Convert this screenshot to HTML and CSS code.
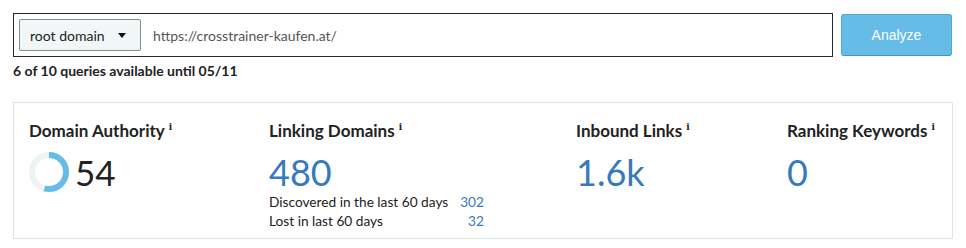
FILE: index.html
```html
<!DOCTYPE html>
<html>
<head>
<meta charset="utf-8">
<link rel="stylesheet" href="styles.css">
</head>
<body>
<div class="wrap">
  <div class="search-row">
    <div class="search-box">
      <div class="scope">root domain <span class="caret"></span></div>
      <div class="url">https://crosstrainer-kaufen.at/</div>
    </div>
    <button class="analyze">Analyze</button>
  </div>
  <div class="quota">6 of 10 queries available until 05/11</div>
  <div class="card">
    <div class="metric">
      <div class="label">Domain Authority<sup class="info">i</sup></div>
      <div class="da-row">
        <svg class="ring" width="40" height="40" viewBox="0 0 40 40">
          <circle cx="20" cy="20" r="17" fill="none" stroke="#eef4f6" stroke-width="6"/>
          <circle cx="20" cy="20" r="17" fill="none" stroke="#67bbe9" stroke-width="6" stroke-dasharray="57.7 106.8" transform="rotate(-90 20 20)"/>
        </svg>
        <span class="value dark">54</span>
      </div>
    </div>
    <div class="metric">
      <div class="label">Linking Domains<sup class="info">i</sup></div>
      <div class="value">480</div>
      <div class="sub"><span>Discovered in the last 60 days</span><span class="num">302</span></div>
      <div class="sub"><span>Lost in last 60 days</span><span class="num">32</span></div>
    </div>
    <div class="metric">
      <div class="label">Inbound Links<sup class="info">i</sup></div>
      <div class="value">1.6k</div>
    </div>
    <div class="metric">
      <div class="label">Ranking Keywords<sup class="info">i</sup></div>
      <div class="value">0</div>
    </div>
  </div>
</div>
</body>
</html>
```
FILE: styles.css
```css
* { box-sizing: border-box; }
body {
  margin: 0;
  background: #fff;
  font-family: Lato, "Noto Sans", sans-serif;
  color: #222;
}
.wrap { padding: 13px 14px 0 13px; }
.search-row {
  display: flex;
  align-items: center;
  gap: 8px;
}
.search-box {
  flex: 1;
  height: 44px;
  border: 1px solid #26262b;
  display: flex;
  align-items: center;
  padding: 0 5px;
  gap: 12px;
}
.scope {
  width: 122px;
  height: 32px;
  background: #f1f6f6;
  border: 1px solid #7f8e8f;
  border-radius: 2px;
  display: flex;
  align-items: center;
  padding-left: 10px;
  font-size: 14px;
  color: #222;
}
.caret {
  width: 0; height: 0;
  margin-left: 13px;
  border-left: 4.5px solid transparent;
  border-right: 4.5px solid transparent;
  border-top: 5px solid #111;
}
.url { font-size: 14px; color: #555; }
.analyze {
  width: 111px;
  height: 42px;
  background: #65bce9;
  border: 1px solid #55a6d2;
  border-bottom-color: #4a92bb;
  border-radius: 3px;
  color: #fff;
  font-family: "Liberation Sans", Arial, sans-serif;
  font-size: 14px;
}
.quota {
  margin-top: 5px;
  font-size: 14px;
  line-height: 17px;
  font-weight: 700;
  color: #222;
}
.card {
  margin-top: 23px;
  width: 940px;
  height: 137px;
  border: 1px solid #dde4e4;
  padding: 12px 15px 0 15px;
  display: grid;
  grid-template-columns: 240px 307px 211px 1fr;
}
.label {
  font-size: 17px;
  font-weight: 700;
  color: #222;
  line-height: 24px;
}
.info {
  font-family: "DejaVu Serif", serif;
  font-size: 9px;
  font-weight: 700;
  margin-left: 4px;
  vertical-align: 7px;
}
.da-row {
  display: flex;
  align-items: center;
  gap: 6px;
  margin-top: 9px;
}
.value {
  font-size: 36px;
  line-height: 40px;
  color: #3679bd;
  font-weight: 400;
}
.metric > .value { margin-top: 9px; }
.value.dark { color: #222; font-size: 35px; }
.sub {
  width: 215px;
  display: flex;
  justify-content: space-between;
  font-size: 13.7px;
  line-height: 19px;
  color: #222;
}
.num { color: #3679bd; }
```
